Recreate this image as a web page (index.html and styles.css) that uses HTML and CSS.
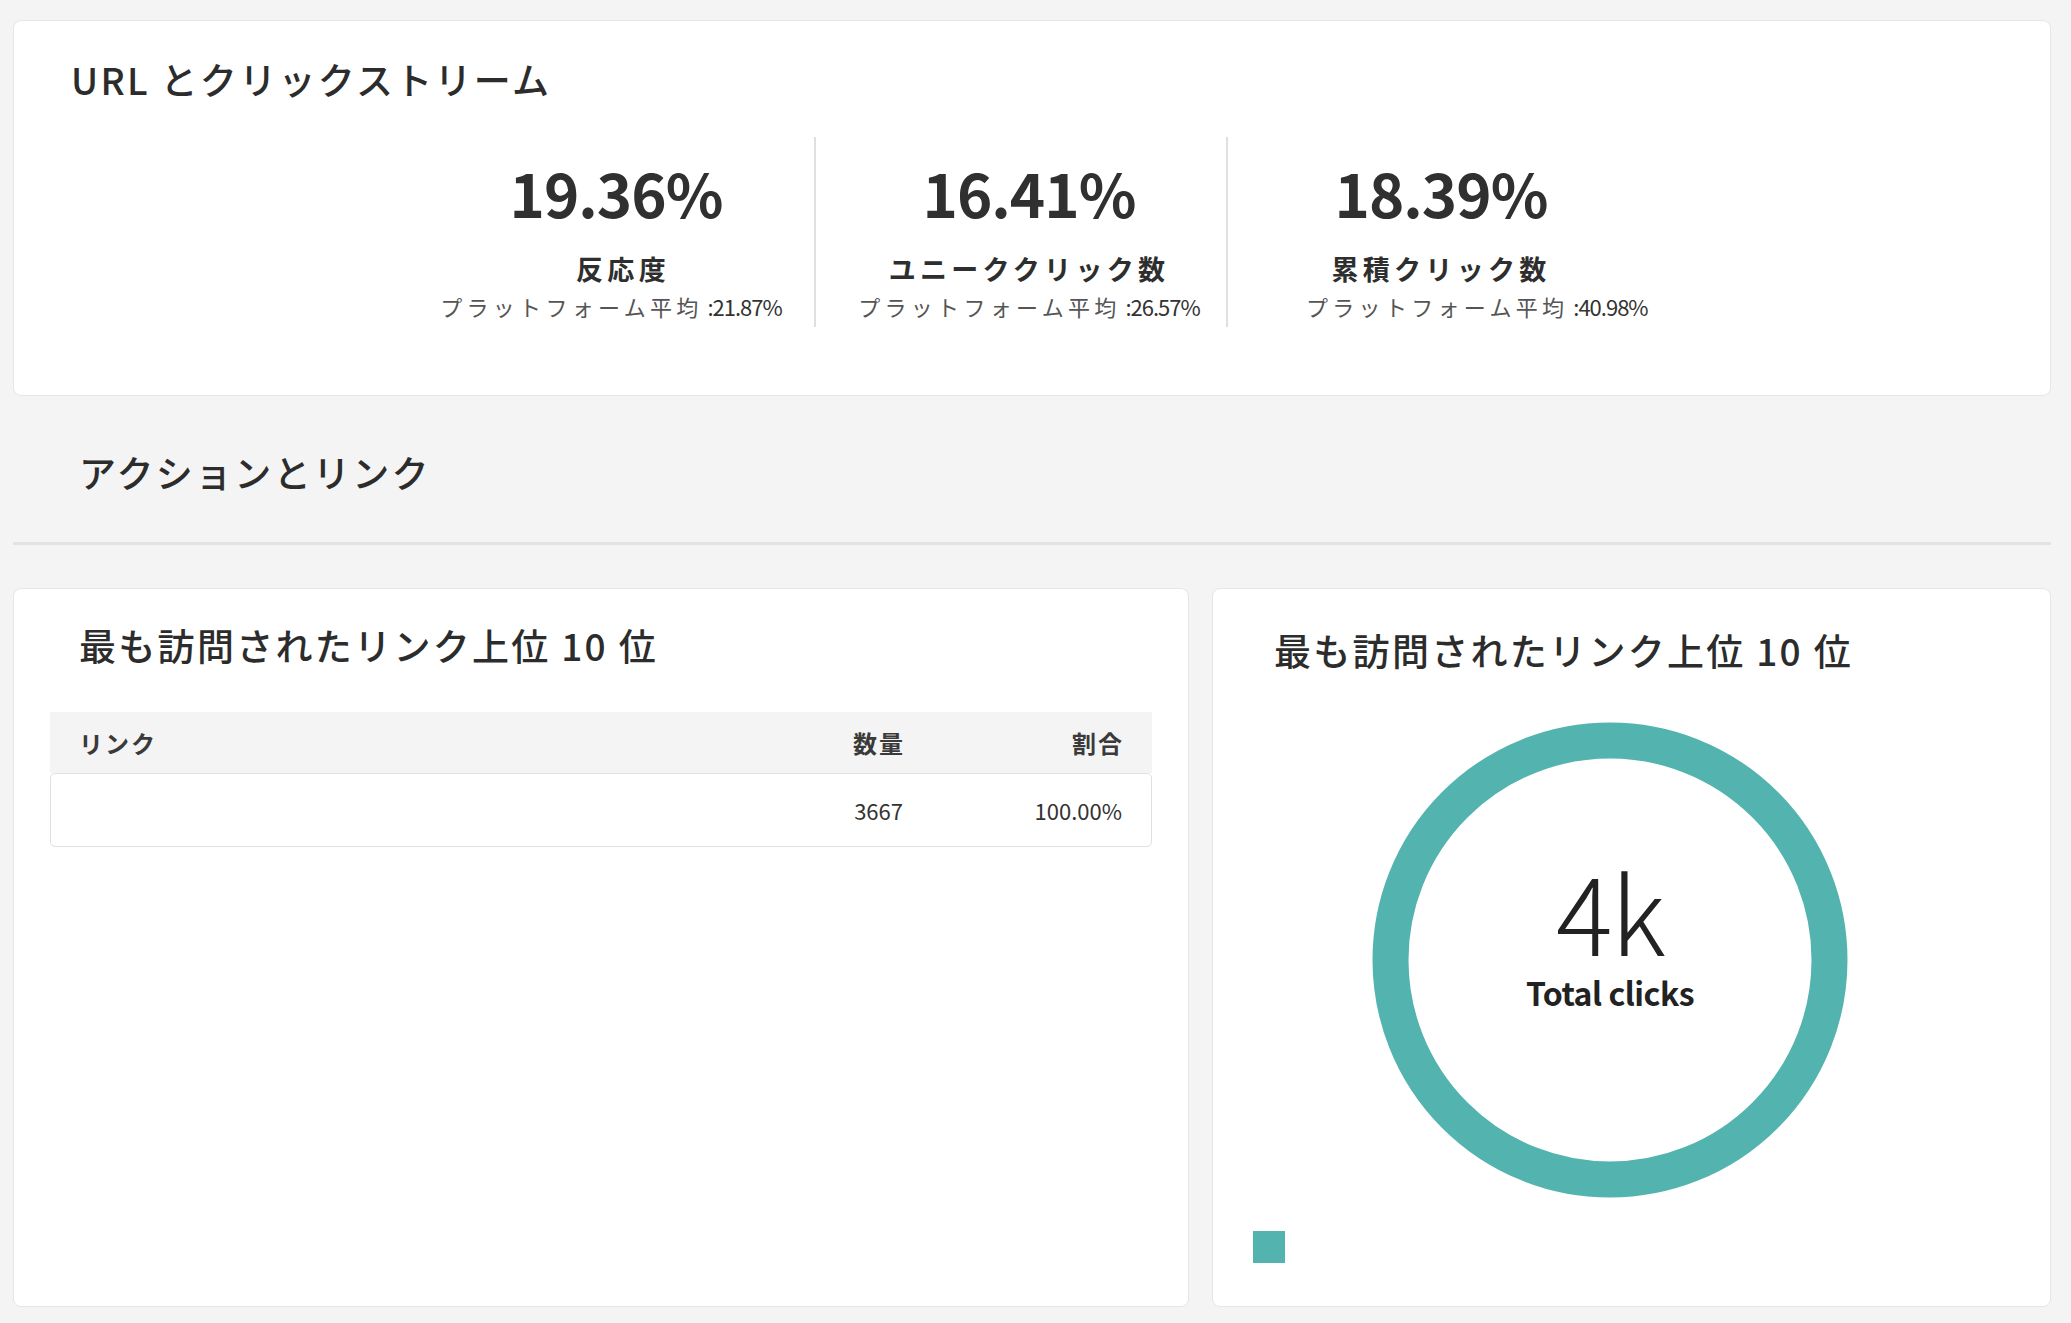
FILE: index.html
```html
<!DOCTYPE html>
<html lang="ja">
<head>
<meta charset="utf-8">
<title>URL とクリックストリーム</title>
<link rel="stylesheet" href="styles.css">
</head>
<body>
<div class="page">
  <section class="card summary">
    <h2 class="heading">URL とクリックストリーム</h2>
    <div class="metrics">
      <div class="metric">
        <div class="metric-value">19.36%</div>
        <div class="metric-label">反応度</div>
        <div class="metric-avg"><span class="avg-label">プラットフォーム平均</span> <span class="avg-num">:21.87%</span></div>
      </div>
      <div class="metric">
        <div class="metric-value">16.41%</div>
        <div class="metric-label">ユニーククリック数</div>
        <div class="metric-avg"><span class="avg-label">プラットフォーム平均</span> <span class="avg-num">:26.57%</span></div>
      </div>
      <div class="metric">
        <div class="metric-value">18.39%</div>
        <div class="metric-label">累積クリック数</div>
        <div class="metric-avg"><span class="avg-label">プラットフォーム平均</span> <span class="avg-num">:40.98%</span></div>
      </div>
    </div>
  </section>

  <h2 class="heading section-title">アクションとリンク</h2>
  <div class="rule"></div>

  <div class="panels">
    <section class="card links-card">
      <h3 class="heading card-title">最も訪問されたリンク上位 10 位</h3>
      <div class="table">
        <div class="table-head">
          <div class="col-link">リンク</div>
          <div class="col-num">数量</div>
          <div class="col-num">割合</div>
        </div>
        <div class="table-row">
          <div class="col-link"></div>
          <div class="col-num">3667</div>
          <div class="col-num">100.00%</div>
        </div>
      </div>
    </section>

    <section class="card chart-card">
      <h3 class="heading card-title chart-title">最も訪問されたリンク上位 10 位</h3>
      <div class="chart">
        <div class="donut">
          <svg width="476" height="476" viewBox="0 0 476 476" aria-hidden="true">
            <circle cx="238" cy="238" r="219.5" fill="none" stroke="#53b3af" stroke-width="36"/>
          </svg>
          <div class="donut-text">
            <div class="donut-value">4k</div>
            <div class="donut-label">Total clicks</div>
          </div>
        </div>
      </div>
      <div class="legend"><span class="swatch"></span></div>
    </section>
  </div>
</div>
</body>
</html>
```

FILE: styles.css
```css
html, body {
  margin: 0;
  padding: 0;
  background: #f4f4f4;
}

body {
  font-family: "Noto Sans CJK JP", "Noto Sans", sans-serif;
  color: #2c2c2c;
}

.page {
  padding: 20px 20px 18px 13px;
}

.card {
  background: #ffffff;
  border: 1px solid #e6e6e6;
  border-radius: 8px;
  box-sizing: border-box;
}

.heading {
  margin: 0;
  font-size: 37px;
  line-height: 40px;
  font-weight: 500;
  letter-spacing: 2.3px;
  color: #2c2c2c;
}

/* summary card */
.summary {
  padding: 38px 0 68px 57px;
}

.metrics {
  display: flex;
  justify-content: center;
  margin-top: 38px;
  padding-right: 81px;
}

.metric {
  width: 412px;
  box-sizing: border-box;
  padding: 25px 0 0 16px;
  height: 190px;
  text-align: center;
}

.metric + .metric {
  border-left: 2px solid #e0e0e0;
}

.metric-value {
  font-size: 60px;
  line-height: 60px;
  font-weight: 700;
  letter-spacing: -1px;
  color: #303030;
}

.metric-label {
  margin-top: 31px;
  font-size: 27px;
  line-height: 32px;
  font-weight: 700;
  letter-spacing: 4.3px;
  color: #2e2e2e;
}

.metric:first-child .metric-label {
  padding-left: 14px;
}

.metric-avg {
  margin-top: 8px;
  font-size: 22px;
  line-height: 26px;
  color: #555555;
  white-space: nowrap;
}

.metric:first-child .metric-avg {
  padding-right: 10px;
}

.metric:last-child .metric-avg {
  padding-left: 62px;
}

.avg-label {
  letter-spacing: 4.3px;
}

.avg-num {
  font-size: 22px;
  letter-spacing: -1px;
  color: #333333;
}

/* section heading */
.section-title {
  margin: 56px 0 0 66px;
}

.rule {
  margin-top: 50px;
  height: 3px;
  background: #e3e3e3;
}

.panels {
  margin-top: 43px;
  display: grid;
  grid-template-columns: 1176px 1fr;
  gap: 23px;
}

/* links table card */
.links-card {
  padding: 36px 36px 0;
}

.card-title {
  margin-left: 29px;
}

.table {
  margin-top: 47px;
}

.table-head,
.table-row {
  display: grid;
  grid-template-columns: 1fr 200px 219px;
  align-items: center;
}

.table-head {
  height: 61px;
  padding: 0 28px 0 29px;
  background: #f4f4f4;
  font-size: 24px;
  font-weight: 700;
  letter-spacing: 2px;
  color: #3a3a3a;
}

.table-row {
  height: 74px;
  box-sizing: border-box;
  border: 1px solid #e0e0e0;
  border-radius: 5px;
  font-size: 22px;
  color: #333333;
  padding: 0 29px 0 28px;
}

.col-num {
  text-align: right;
}

/* chart card */
.chart-card {
  padding: 41px 0 43px 40px;
}

.chart-title {
  margin-left: 21px;
}

.chart {
  margin-top: 52px;
  display: flex;
  justify-content: center;
  padding-right: 83px;
}

.donut {
  position: relative;
  width: 476px;
  height: 476px;
}

.donut svg {
  display: block;
}

.donut-text {
  position: absolute;
  top: 0;
  left: 0;
  right: 0;
  padding-top: 145px;
  text-align: center;
}

.donut-value {
  font-size: 106px;
  line-height: 86px;
  font-weight: 300;
  color: #222222;
  letter-spacing: -2px;
}

.donut-label {
  margin-top: 21px;
  font-size: 32px;
  line-height: 36px;
  font-weight: 700;
  color: #222222;
  letter-spacing: -0.5px;
}

.legend {
  margin-top: 33px;
  height: 32px;
}

.swatch {
  display: block;
  width: 32px;
  height: 32px;
  background: #53b3af;
}
```
